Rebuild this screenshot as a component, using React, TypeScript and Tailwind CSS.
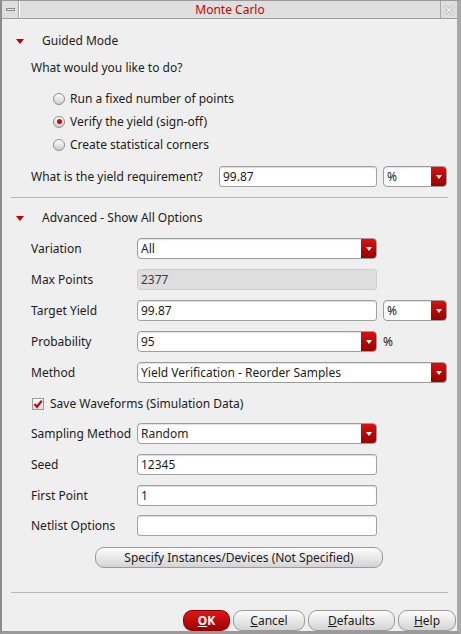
import React from "react";

function Tri({ white = false }: { white?: boolean }) {
  return white ? (
    <span className="block w-0 h-0 border-l-[3px] border-r-[3px] border-t-[4px] border-l-transparent border-r-transparent border-t-white" />
  ) : (
    <span className="block w-0 h-0 border-l-[4px] border-r-[4px] border-t-[5px] border-l-transparent border-r-transparent border-t-[#c40000]" />
  );
}

function Select({ value, w }: { value: string; w: string }) {
  return (
    <div className={`h-[21px] ${w} flex items-stretch rounded-[4px] border border-[#9c9c9c] bg-white overflow-hidden shadow-[inset_0_1px_1px_rgba(0,0,0,0.12)]`}>
      <div className="flex-1 flex items-center pl-[3px] text-[12px] text-[#1c1c1c]">{value}</div>
      <div className="w-[15px] bg-linear-to-b from-[#dc1010] to-[#980000] flex items-center justify-center">
        <Tri white />
      </div>
    </div>
  );
}

function Input({ value, w, disabled = false }: { value: string; w: string; disabled?: boolean }) {
  return (
    <div
      className={`h-[21px] ${w} flex items-center pl-[3px] rounded-[3px] border text-[12px] ${
        disabled
          ? "bg-[#dedede] border-[#cfcfcf] text-[#3a3a3a]"
          : "bg-white border-[#a2a2a2] text-[#1c1c1c] shadow-[inset_0_1px_1px_rgba(0,0,0,0.15)]"
      }`}
    >
      {value}
    </div>
  );
}

function Radio({ checked = false }: { checked?: boolean }) {
  return (
    <span className="w-[12px] h-[12px] rounded-full border border-[#8e8e8e] bg-linear-to-b from-white to-[#cdcdcd] flex items-center justify-center">
      {checked && <span className="w-[5px] h-[5px] rounded-full bg-[#e00000]" />}
    </span>
  );
}

function Row({ label, children, mt = "mt-[10px]" }: { label: string; children: React.ReactNode; mt?: string }) {
  return (
    <div className={`${mt} h-[21px] flex items-center`}>
      <div className="w-[106px] pl-[29px] box-content shrink-0 text-[12px] text-[#1c1c1c] whitespace-nowrap">{label}</div>
      <div className="flex items-center gap-[6px]">{children}</div>
    </div>
  );
}

function Btn({ children, w }: { children: React.ReactNode; w: string }) {
  return (
    <div className={`${w} h-[21px] flex items-center justify-center rounded-[9px] border border-[#9a9a9a] bg-linear-to-b from-[#fdfdfd] to-[#d4d4d4] text-[12px] text-[#1c1c1c]`}>
      {children}
    </div>
  );
}

export default function App() {
  return (
    <div className="w-[461px] h-[634px] bg-[#efefef] border-l-2 border-r-[4px] border-t border-b-[3px] border-l-[#8c8c8c] border-r-[#a9a9a9] border-t-[#9a9a9a] border-b-[#9a9a9a] font-['Noto_Sans',sans-serif] flex flex-col overflow-hidden">
      {/* title bar */}
      <div className="h-[18px] flex border-b border-[#a0a0a0] bg-[#dedede] shrink-0">
        <div className="w-[17px] border-r border-[#a8a8a8] flex items-center justify-center">
          <span className="block w-[9px] h-[3px] border border-[#8a8a8a] bg-[#e8e8e8]" />
        </div>
        <div className="flex-1 flex items-center justify-center text-[12px] text-[#d00000] border-l border-white">Monte Carlo</div>
        <div className="w-[17px] border-l border-[#a8a8a8] flex items-center justify-center">
          <svg width="12" height="12" viewBox="0 0 12 12">
            <path d="M1.5 1.5 L10.5 10.5 M10.5 1.5 L1.5 10.5" stroke="#b8b8b8" strokeWidth="3" />
            <path d="M1.5 1.5 L10.5 10.5 M10.5 1.5 L1.5 10.5" stroke="#f4f4f4" strokeWidth="1.2" />
          </svg>
        </div>
      </div>

      {/* Guided mode */}
      <div className="mt-[12px] h-[20px] flex items-center">
        <div className="w-[40px] pl-[14px]"><Tri /></div>
        <span className="text-[12px] text-[#1c1c1c]">Guided Mode</span>
      </div>
      <div className="mt-[7px] h-[20px] flex items-center pl-[29px] text-[12px] text-[#1c1c1c]">What would you like to do?</div>
      <div className="mt-[9px] flex flex-col">
        {[
          ["Run a fixed number of points", false],
          ["Verify the yield (sign-off)", true],
          ["Create statistical corners", false],
        ].map(([t, c]) => (
          <div key={t as string} className="h-[23px] flex items-center pl-[51px] gap-[5px]">
            <Radio checked={c as boolean} />
            <span className="text-[12px] text-[#1c1c1c]">{t as string}</span>
          </div>
        ))}
      </div>
      <div className="mt-[10px] h-[21px] flex items-center">
        <div className="w-[217px] shrink-0 pl-[29px] text-[12px] text-[#1c1c1c] whitespace-nowrap">What is the yield requirement?</div>
        <div className="flex items-center gap-[6px]">
          <Input value="99.87" w="w-[158px]" />
          <Select value="%" w="w-[64px]" />
        </div>
      </div>
      <div className="mt-[10px] h-px ml-[9px] w-[437px] bg-[#b8b8b8]" />

      {/* Advanced */}
      <div className="mt-[10px] h-[20px] flex items-center">
        <div className="w-[40px] pl-[14px]"><Tri /></div>
        <span className="text-[12px] text-[#1c1c1c]">Advanced - Show All Options</span>
      </div>
      <Row label="Variation">
        <Select value="All" w="w-[240px]" />
      </Row>
      <Row label="Max Points">
        <Input value="2377" w="w-[240px]" disabled />
      </Row>
      <Row label="Target Yield">
        <Input value="99.87" w="w-[240px]" />
        <Select value="%" w="w-[64px]" />
      </Row>
      <Row label="Probability">
        <Select value="95" w="w-[240px]" />
        <span className="text-[12px] text-[#1c1c1c]">%</span>
      </Row>
      <Row label="Method">
        <Select value="Yield Verification - Reorder Samples" w="w-[310px]" />
      </Row>
      <div className="mt-[10px] h-[21px] flex items-center pl-[30px] gap-[6px]">
        <span className="w-[12px] h-[12px] border border-[#9a9a9a] bg-linear-to-b from-white to-[#e0e0e0] flex items-center justify-center">
          <svg width="10" height="10" viewBox="0 0 10 10">
            <path d="M1.5 5 L4 7.8 L8.8 1.8" stroke="#d00000" strokeWidth="2.2" fill="none" />
          </svg>
        </span>
        <span className="text-[12px] text-[#1c1c1c]">Save Waveforms (Simulation Data)</span>
      </div>
      <Row label="Sampling Method" mt="mt-[9px]">
        <Select value="Random" w="w-[240px]" />
      </Row>
      <Row label="Seed">
        <Input value="12345" w="w-[240px]" />
      </Row>
      <Row label="First Point">
        <Input value="1" w="w-[240px]" />
      </Row>
      <Row label="Netlist Options" mt="mt-[9px]">
        <Input value="" w="w-[240px]" />
      </Row>
      <div className="mt-[11px] flex pl-[93px]">
        <Btn w="w-[288px]">Specify Instances/Devices (Not Specified)</Btn>
      </div>
      <div className="mt-[24px] h-px ml-[9px] w-[437px] bg-[#b8b8b8]" />
      <div className="mt-[17px] flex justify-end pr-[1px] gap-[3px]">
        <div className="w-[47px] h-[21px] flex items-center justify-center rounded-[9px] border border-[#8a0000] bg-linear-to-b from-[#e01818] to-[#a00000] text-[12px] font-bold text-white">
          <span><span className="underline">O</span>K</span>
        </div>
        <Btn w="w-[72px]"><span><span className="underline">C</span>ancel</span></Btn>
        <Btn w="w-[87px]"><span><span className="underline">D</span>efaults</span></Btn>
        <Btn w="w-[58px]"><span><span className="underline">H</span>elp</span></Btn>
      </div>
    </div>
  );
}
